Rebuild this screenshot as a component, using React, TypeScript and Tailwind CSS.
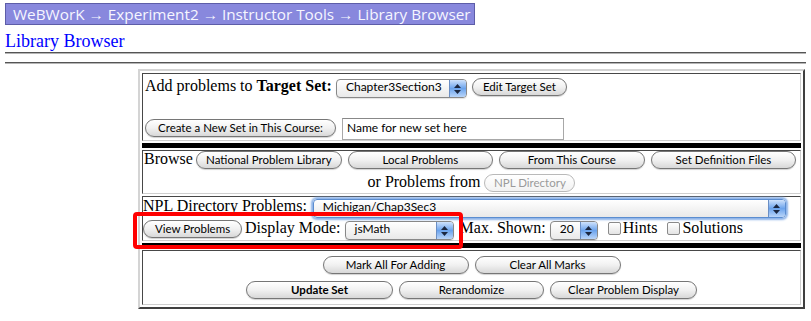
import React from "react";

type ButtonProps = {
  label: string;
  className: string;
  bold?: boolean;
  disabled?: boolean;
};

// Aqua style pill button, as Safari draws <input type="submit">
function AquaButton({ label, className, bold, disabled }: ButtonProps) {
  return (
    <div
      className={`h-[18px] shrink-0 whitespace-nowrap rounded-full border bg-linear-to-b pt-[1px] text-center font-['Lato',sans-serif] text-[11.5px] leading-[14px] ${className} ${
        disabled
          ? "border-[#b9b9b9] from-white to-[#f2f2f2] text-[#9a9a9a]"
          : "border-[#767676] from-white via-[#f1f1f1] to-[#d8d8d8] text-black shadow-[0_1px_1px_rgba(0,0,0,0.18)]"
      } ${bold ? "font-bold" : ""}`}
    >
      {label}
    </div>
  );
}

type SelectProps = {
  value: string;
  className: string;
  focus?: boolean;
};

function AquaSelect({ value, className, focus }: SelectProps) {
  return (
    <div
      className={`flex h-[19px] shrink-0 rounded-[4px] border bg-linear-to-b from-white to-[#e9e9e9] ${className} ${
        focus
          ? "border-[#5b8dd0] shadow-[0_0_2px_2px_#8db3e8]"
          : "border-[#888888] shadow-[0_1px_1px_rgba(0,0,0,0.12)]"
      }`}
    >
      <div className="flex-1 overflow-hidden whitespace-nowrap pl-[9px] font-['Lato',sans-serif] text-[12px] leading-[14px] text-black">
        {value}
      </div>
      <div className="flex w-[17px] flex-col items-center justify-center gap-[2px] rounded-r-[3px] border-l border-[#6a8ec4] bg-linear-to-b from-[#cfe2fb] via-[#6ba3ec] to-[#b9d5f9]">
        <svg width="7" height="4" viewBox="0 0 7 4">
          <path d="M3.5 0L7 4H0z" fill="#1b2740" />
        </svg>
        <svg width="7" height="4" viewBox="0 0 7 4">
          <path d="M0 0h7L3.5 4z" fill="#1b2740" />
        </svg>
      </div>
    </div>
  );
}

function Check({ className }: { className: string }) {
  return (
    <div
      className={`h-[13px] w-[13px] shrink-0 translate-y-[2px] rounded-[2px] border border-[#8a8a8a] bg-linear-to-b from-white to-[#e4e4e4] ${className}`}
    />
  );
}

const cell =
  "border border-[#474747] border-r-[#cfcfcf] border-b-[#cfcfcf]";

export default function App() {
  return (
    <div className="relative h-[321px] w-[811px] overflow-hidden bg-white">
      {/* breadcrumb bar */}
      <div className="ml-[5px] mt-[3px] h-[22px] w-[470px] border border-[#5d5da8] bg-[#8888dd] pl-[7px] font-['Open_Sans',sans-serif] text-[15.3px] leading-[20px] text-[#f6f6ff]">
        WeBWorK → Experiment2 → Instructor Tools → Library Browser
      </div>

      <div className="ml-[5px] mt-[6px] h-[20px] font-['Liberation_Serif',serif] text-[18px] leading-[20px] text-[#0000ff]">
        Library Browser
      </div>
      <div className="mx-[5px] mt-[1px] h-[2px] border-t border-b border-t-[#555555] border-b-[#b5b5b5]" />
      <div className="mx-[5px] mt-[8px] h-[2px] border-t border-b border-t-[#555555] border-b-[#b5b5b5]" />

      {/* browser table */}
      <div className="ml-[138px] mt-[5px] flex w-[667px] flex-col gap-[2px] border-2 border-[#d4d4d4] border-r-[#404040] border-b-[#404040] p-[2px] font-['Liberation_Serif',serif] text-[16px] text-black">
        <div className={`${cell} h-[68px] pl-[2px] pt-[4px]`}>
          <div className="flex h-[19px] items-baseline">
            <span className="leading-[14px]">
              Add problems to <b>Target Set:</b>
            </span>
            <AquaSelect value="Chapter3Section3" className="ml-[4px] w-[131px]" />
            <AquaButton label="Edit Target Set" className="ml-[5px] w-[95px]" />
          </div>
          <div className="mt-[21px] flex h-[22px] items-baseline">
            <AquaButton label="Create a New Set in This Course:" className="w-[191px]" />
            <div className="ml-[6px] h-[22px] w-[222px] border border-[#a8a8a8] border-t-[#888888] pl-[4px] font-['Lato',sans-serif] text-[12px] leading-[17px]">
              Name for new set here
            </div>
          </div>
        </div>

        <div className="h-[5px] bg-black" />

        <div className={`${cell} h-[44px]`}>
          <div className="flex h-[18px] items-baseline pl-[1px]">
            <span className="leading-[14px]">Browse</span>
            <AquaButton label="National Problem Library" className="ml-[3px] w-[146px]" />
            <AquaButton label="Local Problems" className="ml-[6px] w-[145px]" />
            <AquaButton label="From This Course" className="ml-[6px] w-[146px]" />
            <AquaButton label="Set Definition Files" className="ml-[6px] w-[145px]" />
          </div>
          <div className="mt-[5px] flex h-[18px] items-baseline justify-center">
            <span className="leading-[14px]">or Problems from</span>
            <AquaButton label="NPL Directory" className="ml-[4px] w-[91px]" disabled />
          </div>
        </div>

        <div className={`${cell} h-[45px]`}>
          <div className="mt-[2px] flex h-[19px] items-baseline">
            <span className="leading-[14px]">NPL Directory Problems:</span>
            <AquaSelect value="Michigan/Chap3Sec3" className="ml-[6px] w-[473px]" focus />
          </div>
          <div className="mt-[2px] flex h-[19px] items-baseline">
            <AquaButton label="View Problems" className="w-[99px]" />
            <span className="ml-[3px] leading-[14px]">Display Mode:</span>
            <AquaSelect value="jsMath" className="ml-[4px] w-[109px]" />
            <span className="ml-[6px] leading-[14px]">Max. Shown:</span>
            <AquaSelect value="20" className="ml-[4px] w-[48px]" />
            <Check className="ml-[10px]" />
            <span className="ml-[2px] leading-[14px]">Hints</span>
            <Check className="ml-[10px]" />
            <span className="ml-[2px] leading-[14px]">Solutions</span>
          </div>
        </div>

        <div className="h-[5px] bg-black" />

        <div className={`${cell} flex h-[55px] flex-col items-center`}>
          <div className="mt-[5px] flex gap-[6px]">
            <AquaButton label="Mark All For Adding" className="w-[146px]" />
            <AquaButton label="Clear All Marks" className="w-[146px]" />
          </div>
          <div className="mt-[7px] flex gap-[6px]">
            <AquaButton label="Update Set" className="w-[147px]" bold />
            <AquaButton label="Rerandomize" className="w-[145px]" />
            <AquaButton label="Clear Problem Display" className="w-[147px]" />
          </div>
        </div>
      </div>

      {/* red highlight drawn over the display mode row */}
      <div className="absolute left-[133px] top-[212px] h-[37px] w-[330px] rounded-[4px] border-4 border-[#ff0000]" />
    </div>
  );
}
